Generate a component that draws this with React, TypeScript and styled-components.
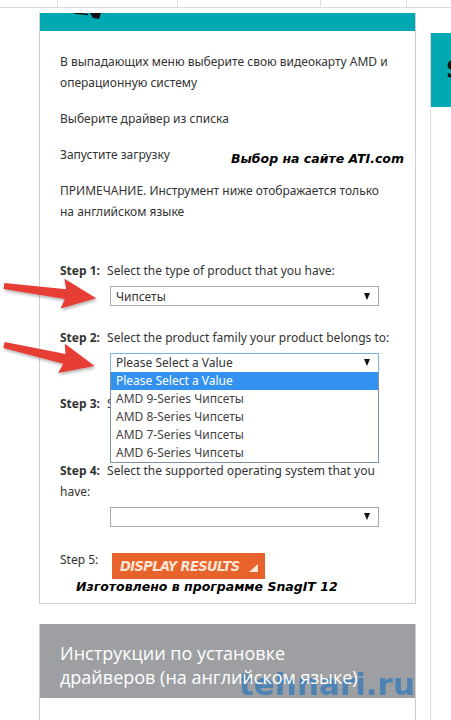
import React from 'react';
import styled, { createGlobalStyle } from 'styled-components';

const GlobalStyle = createGlobalStyle`
  html, body {
    margin: 0;
    padding: 0;
    background: #fff;
  }
  body {
    width: 451px;
    height: 720px;
    overflow: hidden;
    font-family: 'Noto Sans', 'Open Sans', sans-serif;
    color: #333;
  }
  * { box-sizing: border-box; }
`;

const TEAL = '#00a9b2';

const Page = styled.div`
  position: relative;
  width: 451px;
  height: 720px;
  overflow: hidden;
`;

const TopStrip = styled.div`
  display: flex;
  height: 8px;
  border-bottom: 1px solid #dcdcdc;
`;

const StripCell = styled.div<{ w: number }>`
  width: ${({ w }) => w}px;
  flex: none;
  border-right: 1px solid #dcdcdc;
`;

const Layout = styled.div`
  display: flex;
  padding-left: 39px;
  margin-top: 5px;
  height: 720px;
`;

const Main = styled.div`
  width: 377px;
  flex: none;
  display: flex;
  flex-direction: column;
  gap: 20px;
`;

const Side = styled.div`
  flex: 1;
  margin-left: 14px;
  margin-top: 20px;
  border-left: 1px solid #dcdcdc;
`;

const SideBanner = styled.div`
  height: 74px;
  background: ${TEAL};
  display: flex;
  align-items: center;
  padding-left: 15px;
  overflow: hidden;
  font: bold 24px 'DejaVu Sans', sans-serif;
  color: #111;
`;

const Card = styled.div`
  border: 1px solid #cfcfcf;
  border-top: none;
  background: #fff;
`;

const TealHeader = styled.div`
  height: 18px;
  background: ${TEAL};
  display: flex;
  padding-left: 34px;
`;

const CardBody = styled.div`
  position: relative;
  padding: 20px 19px 6px 20px;
`;

const Para = styled.p`
  margin: 0 0 15px;
  font-size: 12px;
  line-height: 21px;
`;

const Annotation = styled.div<{ top: number; left: number }>`
  position: absolute;
  top: ${({ top }) => top}px;
  left: ${({ left }) => left}px;
  font: italic bold 12.5px 'DejaVu Sans', sans-serif;
  color: #000;
  white-space: nowrap;
`;

const Steps = styled.div`
  margin-top: 17.5px;
`;

const Step = styled.div`
  padding-top: 20.5px;
  font-size: 12px;
  line-height: 21px;
`;

const StepLabel = styled.b`
  font-weight: 700;
  margin-right: 4px;
`;

const SelectBox = styled.div<{ active?: boolean }>`
  position: relative;
  margin: 5px 0 0 50px;
  width: 269px;
  height: 20px;
  border: 1px solid ${({ active }) => (active ? '#7eb4ea' : '#a9a9a9')};
  display: flex;
  align-items: center;
  padding: 0 8px 0 5px;
  font-size: 12px;
  color: #333;
  background: #fff;
`;

const SelectValue = styled.span`
  flex: 1;
`;

const Caret = styled.span`
  width: 0;
  height: 0;
  border-left: 3.5px solid transparent;
  border-right: 3.5px solid transparent;
  border-top: 7px solid #111;
`;

const DropList = styled.div`
  position: absolute;
  top: 100%;
  left: -1px;
  width: 269px;
  border: 1px solid #7f8fa8;
  border-top: none;
  background: #fff;
  z-index: 2;
`;

const DropItem = styled.div<{ selected?: boolean }>`
  height: 18px;
  line-height: 18px;
  padding-left: 5px;
  font-size: 12px;
  color: ${({ selected }) => (selected ? '#fff' : '#444')};
  background: ${({ selected }) => (selected ? '#3392f0' : '#fff')};
`;

const FinalRow = styled.div`
  display: flex;
  align-items: flex-start;
  padding-top: 22.5px;
  font-size: 12px;
  line-height: 21px;
`;

const FinalLabel = styled.span`
  width: 52px;
  flex: none;
`;

const ResultsButton = styled.div`
  margin-top: 4px;
  width: 153px;
  height: 26px;
  background: #e8622b;
  display: flex;
  align-items: center;
  padding-left: 8px;
  gap: 9px;
  font: italic bold 14.5px 'Liberation Sans Narrow', 'DejaVu Sans Condensed', sans-serif;
  letter-spacing: -0.6px;
  color: #fbe6d6;
  white-space: nowrap;
`;

const Corner = styled.span`
  width: 0;
  height: 0;
  border-left: 9px solid transparent;
  border-bottom: 8px solid #fbe6d6;
  margin-top: 3px;
`;

const Credit = styled.div`
  margin-left: 16px;
  height: 18px;
  line-height: 18px;
  font: italic bold 12.5px 'DejaVu Sans', sans-serif;
  color: #000;
`;

const GrayHeader = styled.div`
  position: relative;
  height: 74px;
  background: #9e9fa2;
  padding: 17px 20px 0;
  overflow: hidden;
`;

const GrayTitle = styled.div`
  position: relative;
  z-index: 1;
  max-width: 322px;
  font: 18px 'Open Sans', 'Noto Sans', sans-serif;
  line-height: 24px;
  color: #fff;
`;

const Watermark = styled.div`
  position: absolute;
  left: 199px;
  top: 45px;
  font: bold 31px 'DejaVu Sans', sans-serif;
  line-height: 1;
  color: #3f7fb8;
  opacity: 0.85;
  white-space: nowrap;
`;

const CardFill = styled.div`
  height: 40px;
`;

const Arrows = styled.svg`
  position: absolute;
  left: 0;
  top: 270px;
  width: 110px;
  height: 130px;
  z-index: 3;
  pointer-events: none;
`;

const arrowPath = 'M0,-3 L62,-5 L59,-15 L93,0 L59,15 L62,5 L0,3 Z';

const products = [
  'AMD 9-Series Чипсеты',
  'AMD 8-Series Чипсеты',
  'AMD 7-Series Чипсеты',
  'AMD 6-Series Чипсеты',
];

export default function App() {
  return (
    <Page>
      <GlobalStyle />
      <TopStrip>
        {[58, 120, 143, 86].map((w) => (
          <StripCell key={w} w={w} />
        ))}
      </TopStrip>
      <Layout>
        <Main>
          <Card>
            <TealHeader>
              <svg width="30" height="8" viewBox="0 0 30 8">
                <path d="M0,0 L14,1.5" stroke="#111" strokeWidth="1.5" />
                <path d="M16,0 L27,0 L25,6 L19,5 Z" fill="#111" />
              </svg>
            </TealHeader>
            <CardBody>
              <Para>В выпадающих меню выберите свою видеокарту AMD и операционную систему</Para>
              <Para>Выберите драйвер из списка</Para>
              <Para>Запустите загрузку</Para>
              <Para>ПРИМЕЧАНИЕ. Инструмент ниже отображается только на английском языке</Para>
              <Annotation top={120} left={191}>Выбор на сайте ATI.com</Annotation>

              <Steps>
                <Step>
                  <StepLabel>Step 1:</StepLabel> Select the type of product that you have:
                  <SelectBox>
                    <SelectValue>Чипсеты</SelectValue>
                    <Caret />
                  </SelectBox>
                </Step>
                <Step>
                  <StepLabel>Step 2:</StepLabel> Select the product family your product belongs to:
                  <SelectBox active>
                    <SelectValue>Please Select a Value</SelectValue>
                    <Caret />
                    <DropList>
                      <DropItem selected>Please Select a Value</DropItem>
                      {products.map((p) => (
                        <DropItem key={p}>{p}</DropItem>
                      ))}
                    </DropList>
                  </SelectBox>
                </Step>
                <Step>
                  <StepLabel>Step 3:</StepLabel> Select your product model:
                  <SelectBox>
                    <SelectValue />
                    <Caret />
                  </SelectBox>
                </Step>
                <Step>
                  <StepLabel>Step 4:</StepLabel> Select the supported operating system that you have:
                  <SelectBox>
                    <SelectValue />
                    <Caret />
                  </SelectBox>
                </Step>
                <FinalRow>
                  <FinalLabel>Step 5:</FinalLabel>
                  <ResultsButton>
                    DISPLAY RESULTS
                    <Corner />
                  </ResultsButton>
                </FinalRow>
                <Credit>Изготовлено в программе SnagIT 12</Credit>
              </Steps>
            </CardBody>
          </Card>
          <Card>
            <GrayHeader>
              <Watermark>tehnari.ru</Watermark>
              <GrayTitle>Инструкции по установке драйверов (на английском языке)</GrayTitle>
            </GrayHeader>
            <CardFill />
          </Card>
        </Main>
        <Side>
          <SideBanner>S</SideBanner>
        </Side>
      </Layout>
      <Arrows viewBox="0 0 110 130">
        <defs>
          <filter id="sh" x="-20%" y="-50%" width="140%" height="200%">
            <feDropShadow dx="1" dy="2" stdDeviation="1.5" floodColor="#000" floodOpacity="0.3" />
          </filter>
        </defs>
        <g filter="url(#sh)" fill="#e63c36">
          <path d={arrowPath} transform="translate(4,16) rotate(7.5)" />
          <path d={arrowPath} transform="translate(4,75) rotate(13)" />
        </g>
      </Arrows>
    </Page>
  );
}
